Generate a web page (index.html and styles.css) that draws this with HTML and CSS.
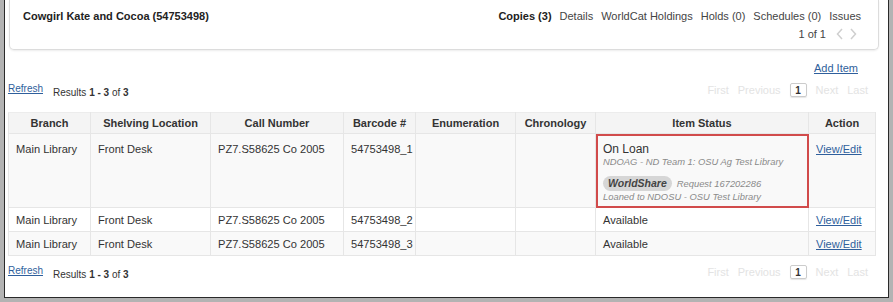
FILE: index.html
```html
<!DOCTYPE html>
<html>
<head>
<meta charset="utf-8">
<link rel="stylesheet" href="styles.css">
</head>
<body>
<div class="frame">
  <div class="inner">
    <div class="panel">
      <div class="panel-row">
        <div class="title">Cowgirl Kate and Cocoa (54753498)</div>
        <div class="tabs">
          <span class="tab active">Copies (3)</span>
          <span class="tab">Details</span>
          <span class="tab">WorldCat Holdings</span>
          <span class="tab">Holds (0)</span>
          <span class="tab">Schedules (0)</span>
          <span class="tab">Issues</span>
        </div>
      </div>
      <div class="panel-row2">
        <span class="count">1 of 1</span>
        <span class="chev">
          <svg width="8" height="12" viewBox="0 0 8 12"><path d="M6 1 L1.5 6 L6 11" fill="none" stroke="#cfcfcf" stroke-width="1.5"/></svg>
          <svg width="8" height="12" viewBox="0 0 8 12"><path d="M2 1 L6.5 6 L2 11" fill="none" stroke="#cfcfcf" stroke-width="1.5"/></svg>
        </span>
      </div>
    </div>

    <div class="add-row"><a class="link add" href="#">Add Item</a></div>

    <div class="result-row top">
      <div class="results"><a class="link refresh" href="#">Refresh</a><span class="rtext">Results <b>1 - 3</b> of <b>3</b></span></div>
      <div class="pager"><span>First</span><span>Previous</span><span class="page">1</span><span>Next</span><span>Last</span></div>
    </div>

    <table class="copies">
      <colgroup>
        <col class="c-branch"><col class="c-shelf"><col class="c-call"><col class="c-bar"><col class="c-enum"><col class="c-chron"><col class="c-status"><col class="c-action">
      </colgroup>
      <thead>
        <tr><th>Branch</th><th>Shelving Location</th><th>Call Number</th><th>Barcode #</th><th>Enumeration</th><th>Chronology</th><th>Item Status</th><th>Action</th></tr>
      </thead>
      <tbody>
        <tr class="odd tall">
          <td>Main Library</td><td>Front Desk</td><td>PZ7.S58625 Co 2005</td><td>54753498_1</td><td></td><td></td>
          <td class="status hl">
            <div class="st-main">On Loan</div>
            <div class="st-sub">NDOAG - ND Team 1: OSU Ag Test Library</div>
            <div class="st-ws"><span class="pill">WorldShare</span><span class="st-sub">Request 167202286</span></div>
            <div class="st-sub">Loaned to NDOSU - OSU Test Library</div>
          </td>
          <td><a class="link" href="#">View/Edit</a></td>
        </tr>
        <tr class="even">
          <td>Main Library</td><td>Front Desk</td><td>PZ7.S58625 Co 2005</td><td>54753498_2</td><td></td><td></td><td>Available</td><td><a class="link" href="#">View/Edit</a></td>
        </tr>
        <tr class="odd">
          <td>Main Library</td><td>Front Desk</td><td>PZ7.S58625 Co 2005</td><td>54753498_3</td><td></td><td></td><td>Available</td><td><a class="link" href="#">View/Edit</a></td>
        </tr>
      </tbody>
    </table>

    <div class="result-row bottom">
      <div class="results"><a class="link refresh" href="#">Refresh</a><span class="rtext">Results <b>1 - 3</b> of <b>3</b></span></div>
      <div class="pager"><span>First</span><span>Previous</span><span class="page">1</span><span>Next</span><span>Last</span></div>
    </div>
  </div>
</div>
</body>
</html>
```
FILE: styles.css
```css
* { box-sizing: border-box; }
html, body { margin: 0; padding: 0; }
body {
  background: #b3b3b3;
  font-family: "Liberation Sans", Arial, sans-serif;
  color: #333;
  font-size: 12px;
}
.frame {
  width: 893px;
  height: 302px;
  padding: 0 4px 4px 4px;
}
.inner {
  height: 298px;
  background: #fff;
  border: 1px solid #2a2a2a;
  border-top: none;
  overflow: hidden;
}
.panel {
  margin: 0 9px 0 4px;
  height: 50px;
  border: 1px solid #dcdcdc;
  border-top: none;
  border-radius: 0 0 5px 5px;
  box-shadow: 0 1px 2px rgba(0,0,0,0.08);
  padding: 9px 17px 0 13px;
}
.panel-row {
  display: flex;
  justify-content: space-between;
  align-items: center;
  height: 14px;
}
.title {
  font-weight: bold;
  font-size: 11px;
  color: #222;
}
.tabs { display: flex; gap: 8px; font-size: 11px; color: #444; }
.tab.active { font-weight: bold; color: #222; }
.panel-row2 {
  display: flex;
  justify-content: flex-end;
  align-items: center;
  height: 14px;
  margin-top: 4px;
  font-size: 11px;
  color: #444;
}
.chev { display: flex; gap: 5px; margin-left: 10px; margin-right: 4px; }
.chev svg { display: block; }

.link { color: #2f5f9c; text-decoration: underline; }

.add-row {
  display: flex;
  justify-content: flex-end;
  padding-right: 30px;
  margin-top: 11px;
  height: 14px;
  align-items: center;
  font-size: 11px;
}

.result-row {
  display: flex;
  justify-content: space-between;
  align-items: flex-start;
  padding-left: 3px;
  padding-right: 20px;
}
.result-row.top { margin-top: 9px; height: 19px; }
.result-row.bottom { margin-top: 10px; height: 20px; }
.results { display: flex; align-items: flex-start; font-size: 10px; padding-top: 3px; }
.refresh { font-size: 10px; margin-top: -4px; }
.rtext { margin-left: 10px; color: #333; }
.rtext b { font-weight: bold; }
.pager { display: flex; align-items: center; gap: 9px; color: #e3e3e3; font-size: 11px; margin-top: -1px; }
.pager .page {
  color: #333;
  font-weight: bold;
  font-size: 10px;
  border: 1px solid #ccc;
  border-radius: 2px;
  width: 17px;
  height: 14px;
  display: flex;
  align-items: center;
  justify-content: center;
  box-shadow: 0 1px 1px rgba(0,0,0,0.1);
}

.copies {
  margin-left: 3px;
  margin-top: 9px;
  width: 867px;
  table-layout: fixed;
  border-collapse: collapse;
  font-size: 11.1px;
}
.c-branch { width: 82px; }
.c-shelf { width: 120px; }
.c-call { width: 133px; }
.c-bar { width: 72px; }
.c-enum { width: 100px; }
.c-chron { width: 80px; }
.c-status { width: 213px; }
.c-action { width: 67px; }

.copies th {
  background: #f4f4f4;
  font-weight: bold;
  font-size: 11px;
  color: #333;
  height: 21px;
  padding: 0 4px;
  text-align: center;
  border: 1px solid #e6e6e6;
  border-top: 1px solid #ececec;
}
.copies td {
  border-left: 1px solid #e6e6e6;
  border-right: 1px solid #e6e6e6;
  border-bottom: 1px solid #e6e6e6;
  padding: 0 5px 0 7px;
  height: 24px;
  vertical-align: middle;
  color: #333;
  white-space: nowrap;
  overflow: hidden;
}
.copies td .link { font-size: 11px; }
.copies tr.odd td { background: #f9f9f9; }
.copies tr.even td { background: #fff; }
.copies tr.tall td { height: 74px; vertical-align: top; padding-top: 9px; }
.copies tr.tall td.status { padding-top: 8px; }
.copies td.hl { outline: 2px solid #d14b4b; outline-offset: -2px; }
.st-main { font-size: 12px; color: #333; line-height: 14px; }
.st-sub { font-size: 9.4px; font-style: italic; color: #8a8a8a; line-height: 12px; }
.st-ws { display: flex; align-items: center; margin-top: 8px; height: 15px; }
.pill {
  background: #d6d6d6;
  color: #444;
  font-weight: bold;
  font-style: italic;
  font-size: 10.5px;
  border-radius: 8px;
  padding: 1px 5px;
  margin-right: 5px;
  line-height: 13px;
}
```
